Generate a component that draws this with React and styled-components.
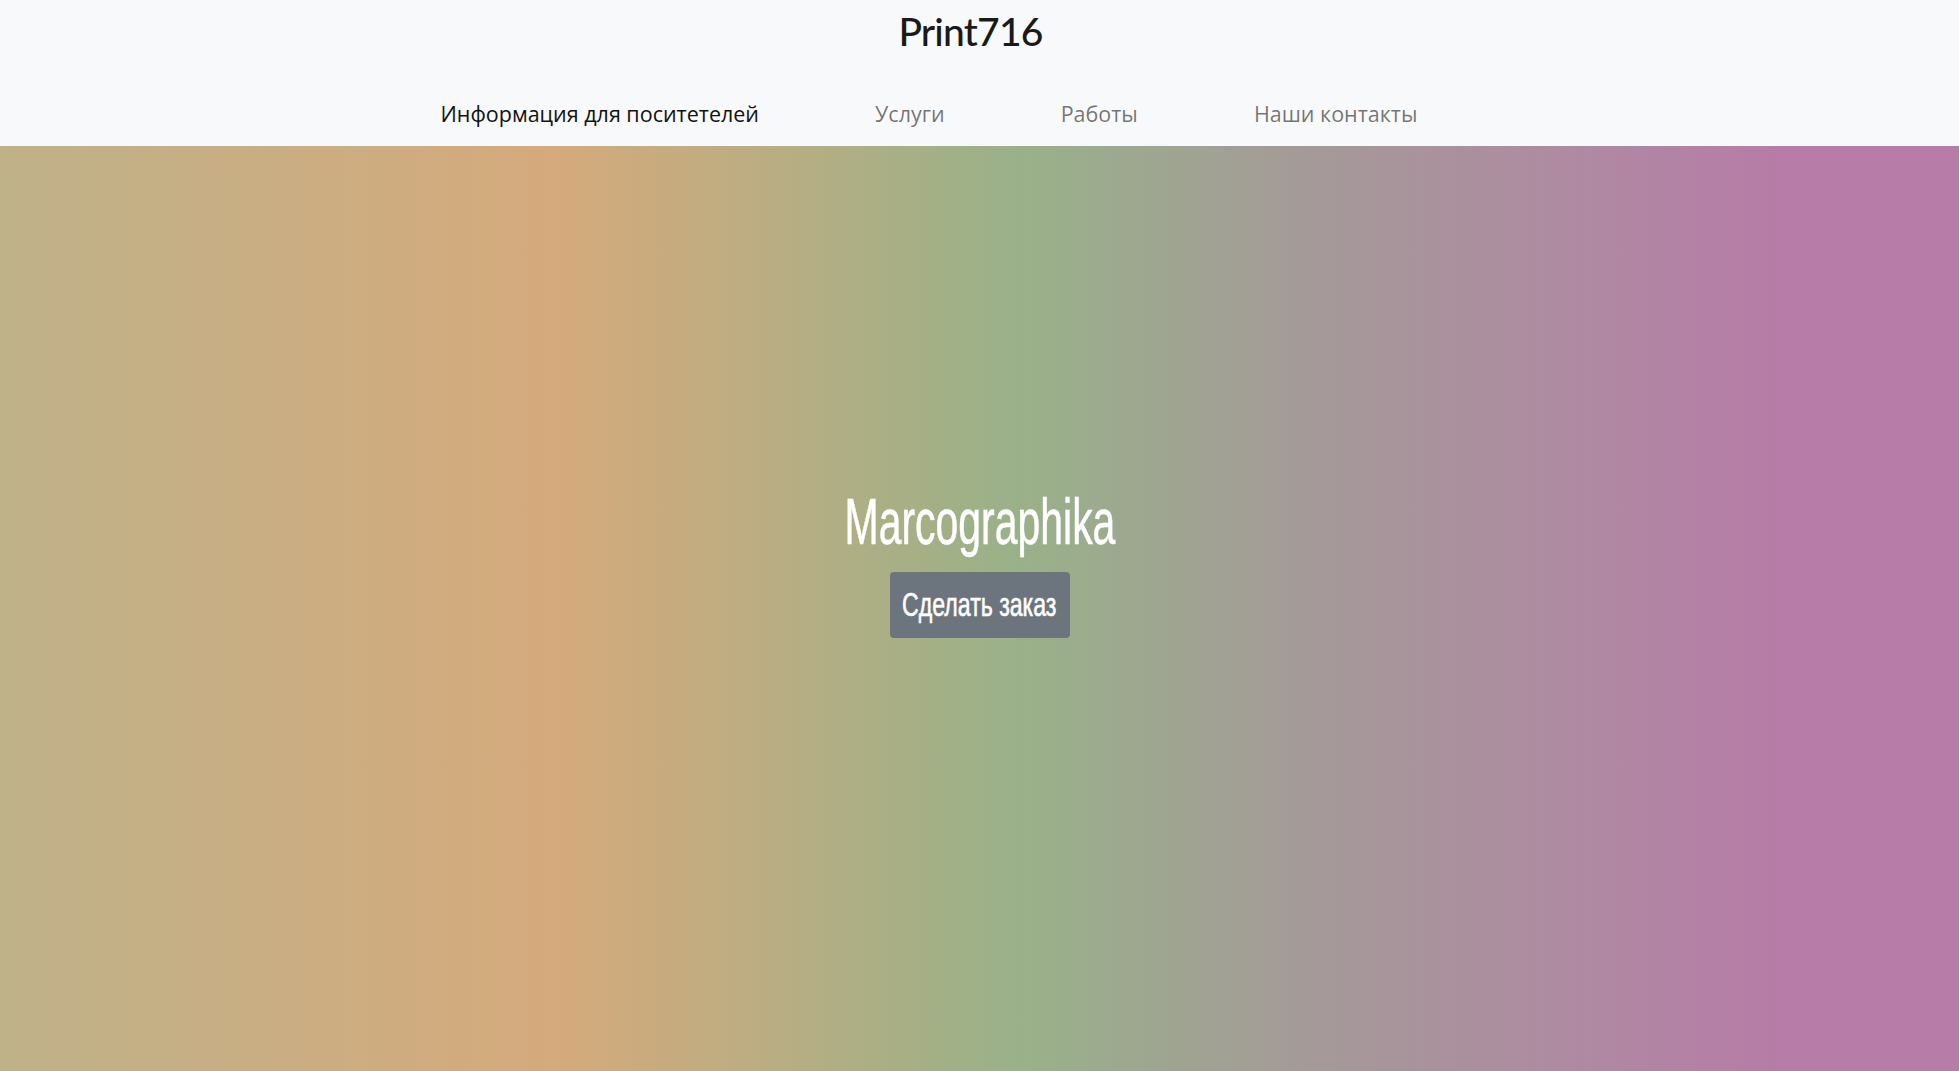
import React from "react";
import styled, { createGlobalStyle } from "styled-components";

const Global = createGlobalStyle`
  html, body { margin: 0; padding: 0; }
  body { background: #f8f9fa; font-family: "Open Sans", "Noto Sans", sans-serif; }
  #root { min-height: 100vh; display: flex; flex-direction: column; }
`;

const Header = styled.header`
  background: #f8f9fa;
  display: flex;
  flex-direction: column;
  align-items: center;
`;

const Brand = styled.h1`
  margin: 0 18px 0 0;
  padding-top: 2px;
  height: 58px;
  font-family: "Lato", "Liberation Sans", sans-serif;
  font-weight: 500;
  font-size: 39px;
  line-height: 58px;
  color: #1a1a1a;
  letter-spacing: -0.8px;
`;

const Nav = styled.nav`
  display: flex;
  justify-content: center;
  align-items: flex-end;
  gap: 116px;
  height: 86px;
  box-sizing: border-box;
  padding: 0 101px 18px 0;
`;

const NavLink = styled.a`
  font-family: "Open Sans", "Noto Sans", sans-serif;
  font-size: 21.5px;
  line-height: 29px;
  color: ${(p) => (p.$active ? "#111" : "rgba(0,0,0,0.55)")};
  text-decoration: none;
  cursor: pointer;
`;

const Hero = styled.section`
  flex: 1;
  background: linear-gradient(
    to right,
    #bfb189 0%,
    #d5aa7c 28.5%,
    #99b189 52%,
    #a49b98 66%,
    #b77ca8 91%,
    #b77ca8 100%
  );
  display: flex;
  flex-direction: column;
  align-items: center;
  padding-top: 340px;
`;

const Condensed = styled.span`
  display: inline-block;
  transform: scaleX(${(p) => p.$sx});
  transform-origin: center;
  white-space: nowrap;
  -webkit-text-stroke: 0.6px #ffffff;
`;

const Title = styled.h2`
  margin: 0;
  font-family: "Liberation Sans Narrow", "Liberation Sans", sans-serif;
  font-weight: 400;
  font-size: 65px;
  line-height: 72px;
  color: #ffffff;
`;

const OrderButton = styled.button`
  margin-top: 14px;
  width: 180px;
  height: 66px;
  border: none;
  border-radius: 4px;
  background: #6c757d;
  color: #fff;
  font-family: "Liberation Sans Narrow", "Liberation Sans", sans-serif;
  font-size: 33px;
  cursor: pointer;
  display: flex;
  align-items: center;
  justify-content: center;
  padding: 0;
`;

export default function App() {
  return (
    <>
      <Global />
      <Header>
        <Brand>Print716</Brand>
        <Nav>
          <NavLink $active>Информация для поситетелей</NavLink>
          <NavLink>Услуги</NavLink>
          <NavLink>Работы</NavLink>
          <NavLink>Наши контакты</NavLink>
        </Nav>
      </Header>
      <Hero>
        <Title>
          <Condensed $sx={0.63}>Marcographika</Condensed>
        </Title>
        <OrderButton>
          <Condensed $sx={0.7}>Сделать заказ</Condensed>
        </OrderButton>
      </Hero>
    </>
  );
}
